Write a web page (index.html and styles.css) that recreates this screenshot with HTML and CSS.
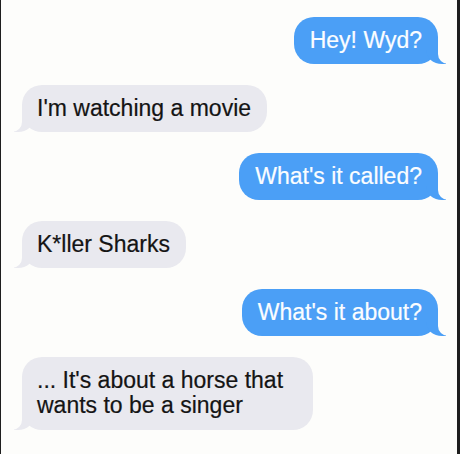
FILE: index.html
```html
<!DOCTYPE html>
<html>
<head>
<meta charset="utf-8">
<link rel="stylesheet" href="styles.css">
</head>
<body>
<div class="frame">
  <div class="chat">
    <div class="msg me">Hey! Wyd?</div>
    <div class="msg them">I'm watching a movie</div>
    <div class="msg me">What's it called?</div>
    <div class="msg them">K*ller Sharks</div>
    <div class="msg me">What's it about?</div>
    <div class="msg them wide">... It's about a horse that<br>wants to be a singer</div>
  </div>
</div>
</body>
</html>
```
FILE: styles.css
```css
html, body {
  margin: 0;
  padding: 0;
  background: #fdfdfb;
}
.frame {
  width: 460px;
  height: 454px;
  box-sizing: border-box;
  border-left: 1px solid #1e1e1e;
  border-right: 3px solid #1e1e1e;
  background: #fdfdfb;
  overflow: hidden;
}
.chat {
  display: flex;
  flex-direction: column;
  gap: 21px;
  padding: 17px 19px 0 21px;
}
.msg {
  position: relative;
  font-family: "Liberation Sans", Arial, sans-serif;
  font-size: 23px;
  line-height: 25px;
  padding: 11px 16px;
  border-radius: 20px;
  max-width: 320px;
  -webkit-text-stroke: 0.2px currentColor;
}
.me {
  align-self: flex-end;
  background: #4b9ff6;
  color: #fbfdff;
}
.them {
  align-self: flex-start;
  background: #e9e9ef;
  color: #141414;
  padding-left: 15px;
}
.wide {
  padding-right: 30px;
  padding-bottom: 12px;
}
.me::before {
  content: "";
  position: absolute;
  bottom: 0;
  right: -8px;
  width: 20px;
  height: 20px;
  background: #4b9ff6;
  border-bottom-left-radius: 16px 14px;
}
.me::after {
  content: "";
  position: absolute;
  bottom: 0;
  right: -10px;
  width: 10px;
  height: 21px;
  background: #fdfdfb;
  border-bottom-left-radius: 10px;
}
.them::before {
  content: "";
  position: absolute;
  bottom: 0;
  left: -8px;
  width: 20px;
  height: 20px;
  background: #e9e9ef;
  border-bottom-right-radius: 16px 14px;
}
.them::after {
  content: "";
  position: absolute;
  bottom: 0;
  left: -10px;
  width: 10px;
  height: 21px;
  background: #fdfdfb;
  border-bottom-right-radius: 10px;
}
```
